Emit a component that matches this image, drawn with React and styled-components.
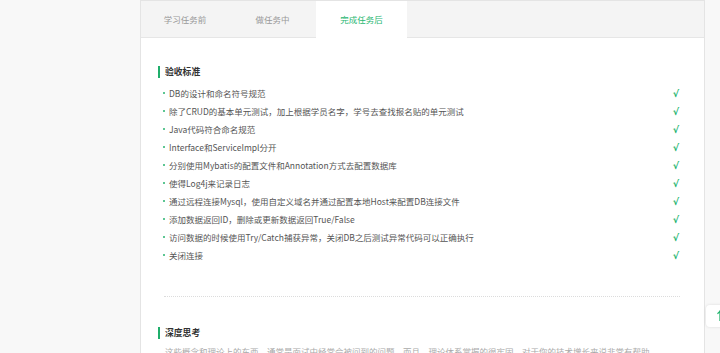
import React from "react";
import styled, { createGlobalStyle } from "styled-components";

const GlobalStyle = createGlobalStyle`
  html, body {
    margin: 0;
    padding: 0;
    background: #f8f8f8;
    font-family: "Noto Sans CJK SC", "Noto Sans", sans-serif;
    overflow: hidden;
  }
`;

const Page = styled.div`
  display: flex;
  padding-left: 140px;
  height: 353px;
  overflow: hidden;
`;

const Card = styled.div`
  width: 563px;
  background: #fff;
  border: 1px solid #e4e4e4;
  border-bottom: none;
`;

const TabBar = styled.div`
  display: flex;
  height: 36px;
  background: #f4f4f4;
  border-bottom: 1px solid #e6e6e6;
`;

const Tab = styled.div`
  width: ${(p) => p.$width}px;
  display: flex;
  align-items: center;
  justify-content: center;
  font-size: 8.5px;
  color: ${(p) => (p.$active ? "#2ab772" : "#999")};
  background: ${(p) => (p.$active ? "#fff" : "transparent")};
  margin-bottom: ${(p) => (p.$active ? "-1px" : "0")};
  padding-bottom: 1px;
`;

const Content = styled.div`
  padding: 28px 24px 0 17px;
`;

const Heading = styled.div`
  border-left: 2px solid #1fae6b;
  padding-left: 5px;
  height: 12px;
  line-height: 12px;
  font-size: 8.8px;
  font-weight: 600;
  color: #333;
`;

const List = styled.ul`
  list-style: none;
  margin: 6px 0 0;
  padding: 0;
`;

const Item = styled.li`
  display: flex;
  align-items: center;
  justify-content: space-between;
  height: 18px;
  padding-left: 6px;
  font-size: 8.5px;
  color: #555;
`;

const ItemText = styled.span`
  display: flex;
  align-items: center;

  &::before {
    content: "";
    width: 2px;
    height: 2px;
    border-radius: 1px;
    background: #27b36f;
    margin: 0 4px 0 -1px;
  }
`;

const Check = styled.span`
  color: #22b46e;
  font-size: 9.5px;
  font-weight: 700;
  font-family: "DejaVu Sans", sans-serif;
  margin-right: 1px;
`;

const Divider = styled.div`
  margin: 32px 0 30px 6px;
  border-top: 1px dotted #dcdcdc;
`;

const Paragraph = styled.p`
  margin: 3px 0 0;
  padding-left: 7px;
  line-height: 18px;
  font-size: 8.5px;
  color: #aaa;
  white-space: nowrap;
`;

const ToTop = styled.div`
  position: fixed;
  left: 706px;
  top: 305px;
  width: 30px;
  height: 22px;
  background: #fff;
  border-radius: 4px;
  box-shadow: 0 0 3px rgba(0, 0, 0, 0.12);
  color: #22b46e;
  font-size: 12px;
  font-weight: 700;
  padding-left: 8px;
  line-height: 22px;
  box-sizing: border-box;
`;

const tabs = [
  { label: "学习任务前", width: 88 },
  { label: "做任务中", width: 87 },
  { label: "完成任务后", width: 91 },
];

const items = [
  "DB的设计和命名符号规范",
  "除了CRUD的基本单元测试，加上根据学员名字，学号去查找报名贴的单元测试",
  "Java代码符合命名规范",
  "Interface和ServiceImpl分开",
  "分别使用Mybatis的配置文件和Annotation方式去配置数据库",
  "使得Log4j来记录日志",
  "通过远程连接Mysql，使用自定义域名并通过配置本地Host来配置DB连接文件",
  "添加数据返回ID，删除或更新数据返回True/False",
  "访问数据的时候使用Try/Catch捕获异常，关闭DB之后测试异常代码可以正确执行",
  "关闭连接",
];

export default function App() {
  return (
    <>
      <GlobalStyle />
      <Page>
        <Card>
          <TabBar>
            {tabs.map((t, i) => (
              <Tab key={t.label} $width={t.width} $active={i === 2}>
                {t.label}
              </Tab>
            ))}
          </TabBar>
          <Content>
            <Heading>验收标准</Heading>
            <List>
              {items.map((it) => (
                <Item key={it}>
                  <ItemText>{it}</ItemText>
                  <Check>√</Check>
                </Item>
              ))}
            </List>
            <Divider />
            <Heading>深度思考</Heading>
            <Paragraph>
              这些概念和理论上的东西，通常是面试中经常会被问到的问题。而且，理论体系掌握的很牢固，对于你的技术增长来说非常有帮助。
            </Paragraph>
          </Content>
        </Card>
      </Page>
      <ToTop>↑</ToTop>
    </>
  );
}
